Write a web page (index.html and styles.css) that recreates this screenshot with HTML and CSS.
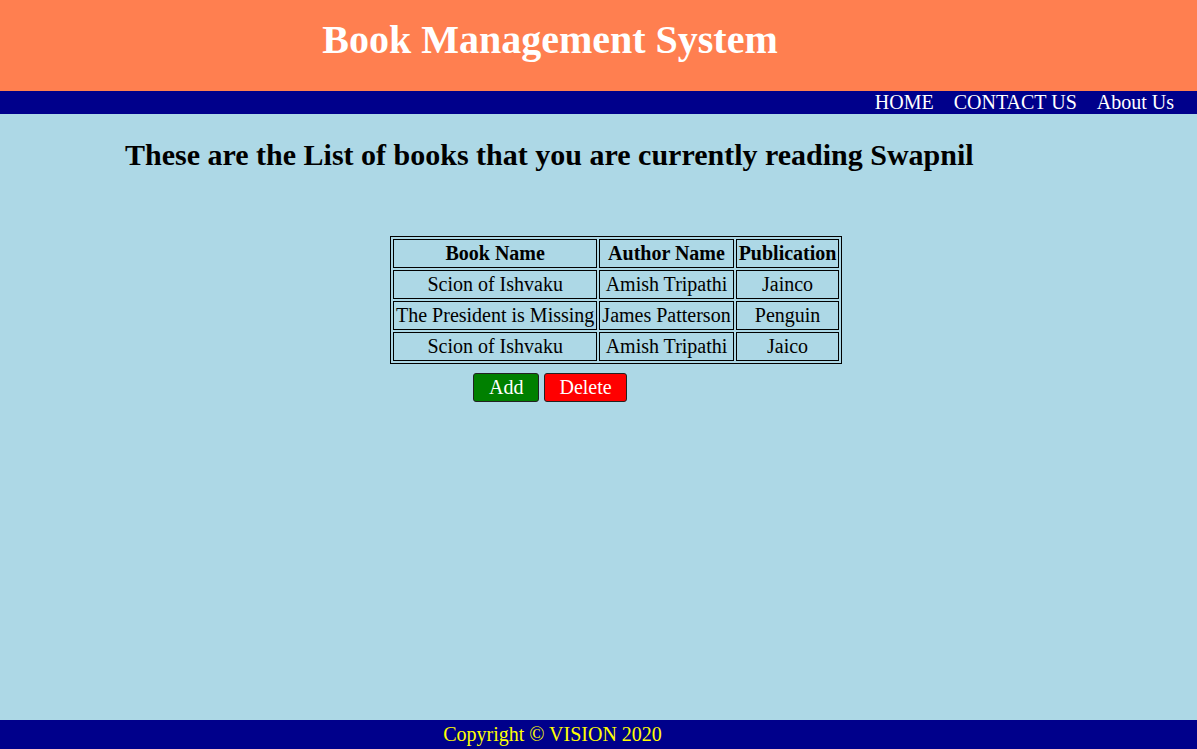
FILE: index.html
```html
<!DOCTYPE html>
<html>
<head>
<meta charset="utf-8">
<title>Book Management System</title>
<link rel="stylesheet" href="styles.css">
</head>
<body>
<div class="page">
  <header class="header">
    <h1 class="title">Book Management System</h1>
  </header>
  <nav class="nav">
    <a class="nav-link" href="#">HOME</a>
    <a class="nav-link" href="#">CONTACT US</a>
    <a class="nav-link" href="#">About Us</a>
  </nav>
  <main class="main">
    <h2 class="heading">These are the List of books that you are currently reading Swapnil</h2>
    <div class="table-area">
      <table class="books">
        <tr><th>Book Name</th><th>Author Name</th><th>Publication</th></tr>
        <tr><td>Scion of Ishvaku</td><td>Amish Tripathi</td><td>Jainco</td></tr>
        <tr><td>The President is Missing</td><td>James Patterson</td><td>Penguin</td></tr>
        <tr><td>Scion of Ishvaku</td><td>Amish Tripathi</td><td>Jaico</td></tr>
      </table>
      <div class="actions">
        <button class="btn btn-add">Add</button>
        <button class="btn btn-delete">Delete</button>
      </div>
    </div>
  </main>
  <footer class="footer">Copyright © VISION 2020</footer>
</div>
</body>
</html>
```
FILE: styles.css
```css
html, body {
  margin: 0;
  padding: 0;
  height: 100%;
}
body {
  font-family: "Liberation Serif", "Times New Roman", serif;
  background: #ADD8E6;
}
.page {
  display: flex;
  flex-direction: column;
  height: 749px;
}
.header {
  background: #FF7F50;
  height: 91px;
  display: flex;
  align-items: center;
  justify-content: center;
  padding-right: 97px;
}
.title {
  margin: 0;
  color: #fff;
  font-size: 40px;
  font-weight: bold;
  padding-bottom: 12px;
}
.nav {
  background: #00008B;
  height: 23px;
  display: flex;
  justify-content: flex-end;
  align-items: center;
  gap: 20px;
  padding-right: 23px;
}
.nav-link {
  color: #fff;
  text-decoration: none;
  font-size: 20px;
}
.main {
  flex: 1;
}
.heading {
  margin: 24px 0 0 125px;
  font-size: 30px;
  font-weight: bold;
  color: #000;
}
.table-area {
  margin: 64px 0 0 390px;
}
.books {
  border: 1px solid #000;
  border-spacing: 2px;
  font-size: 20px;
}
.books th, .books td {
  border: 1px solid #000;
  padding: 2px;
  text-align: center;
}
.actions {
  display: flex;
  gap: 5px;
  margin: 9px 0 0 83px;
}
.btn {
  font-family: "Liberation Serif", "Times New Roman", serif;
  font-size: 20px;
  color: #fff;
  border: 1px solid #222;
  border-radius: 3px;
  height: 29px;
  padding: 0 14px;
}
.btn-add {
  background: #008000;
  padding: 0 15px;
}
.btn-delete {
  background: #FF0000;
}
.footer {
  background: #00008B;
  color: #FFFF00;
  height: 29px;
  display: flex;
  align-items: center;
  justify-content: center;
  padding-right: 92px;
  font-size: 20px;
}
```
